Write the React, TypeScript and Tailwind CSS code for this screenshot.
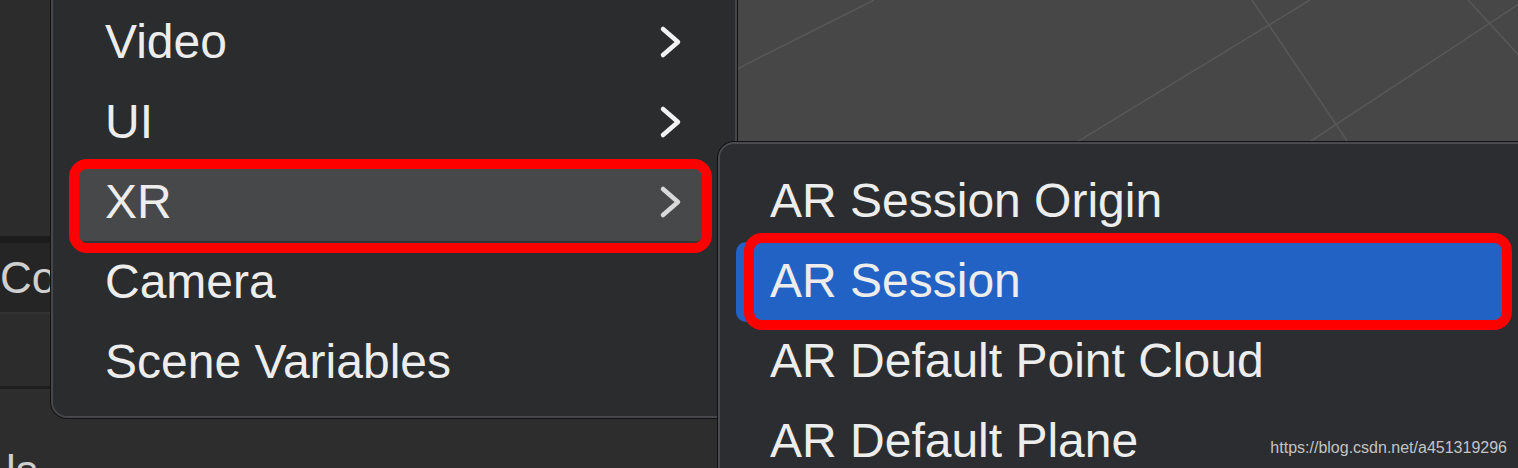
import React from 'react';

const font = { fontFamily: '"Liberation Sans", Arial, sans-serif' };

const Chevron: React.FC<{ dim?: boolean }> = ({ dim }) => (
  <svg width="24" height="34" viewBox="0 0 24 34" className="shrink-0">
    <polyline
      points="4,4 19,17 4,30"
      fill="none"
      stroke={dim ? '#d9d9d9' : '#f2f2f2'}
      strokeWidth="4.5"
      strokeLinecap="round"
      strokeLinejoin="round"
    />
  </svg>
);

const mainItems = [
  { label: 'Video', sub: true },
  { label: 'UI', sub: true },
  { label: 'XR', sub: true, active: true },
  { label: 'Camera', sub: false },
  { label: 'Scene Variables', sub: false },
];

const subItems = [
  { label: 'AR Session Origin' },
  { label: 'AR Session', active: true },
  { label: 'AR Default Point Cloud' },
  { label: 'AR Default Plane' },
];

function SceneGrid() {
  return (
    <svg viewBox="737 0 781 468" className="w-full h-full" preserveAspectRatio="none">
      <g stroke="#585858" strokeWidth="1.5" fill="none">
        <line x1="1310" y1="0" x2="890" y2="256" />
        <line x1="874" y1="0" x2="737" y2="69" />
        <line x1="1525" y1="0" x2="1100" y2="280" />
        <line x1="1252" y1="0" x2="1350" y2="145" />
        <line x1="1468" y1="0" x2="1525" y2="62" />
      </g>
    </svg>
  );
}

export default function App() {
  return (
    <div className="relative w-[1518px] h-[468px] overflow-hidden bg-[#2b2b2b]" style={font}>
      {/* background panels */}
      <div className="flex w-full h-full">
        <div className="w-[737px] h-full flex flex-col shrink-0">
          <div className="h-[236px] shrink-0 bg-[#2c2c2c]" />
          <div className="h-[7px] shrink-0 bg-[#1c1c1c]" />
          <div className="h-[69px] shrink-0 bg-[#252525] flex items-center overflow-hidden">
            <span className="text-[44px] leading-none text-[#cfcfcf]">Co</span>
          </div>
          <div className="h-[2px] shrink-0 bg-[#323232]" />
          <div className="h-[72px] shrink-0 bg-[#2c2c2c]" />
          <div className="h-[3px] shrink-0 bg-[#1e1e1e]" />
          <div className="flex-1 min-h-0 overflow-hidden bg-[#2d2d2d] pt-[60px] pl-[6px]">
            <div className="text-[44px] leading-none text-[#cfcfcf]">ls</div>
          </div>
        </div>
        <div className="flex-1 bg-[#474747]">
          <SceneGrid />
        </div>
      </div>

      {/* main context menu */}
      <div className="absolute left-[51px] top-[-10px] w-[686px] h-[428px] bg-[#2b2c2e] border-2 border-[#46474a] rounded-b-[16px] shadow-[0_0_0_1px_#111] pt-[10px]">
        {mainItems.map((item) => (
          <div key={item.label} className="relative h-[80px] flex items-center justify-between pl-[52px] pr-[52px]">
            {item.active && (
              <>
                <div className="absolute left-[21px] top-[4px] w-[632px] h-[78px] rounded-[10px] bg-[#47484a] border-b-[3px] border-[#333436]" />
                <div className="absolute left-[16px] top-[-3px] w-[643px] h-[94px] rounded-[18px] border-[10px] border-[#ff0000]" />
              </>
            )}
            <span className="relative text-[48px] leading-[80px] text-[#ededed]">{item.label}</span>
            {item.sub && (
              <span className="relative">
                <Chevron dim={item.active} />
              </span>
            )}
          </div>
        ))}
      </div>

      {/* submenu */}
      <div className="absolute left-[718px] top-[142px] w-[830px] h-[360px] bg-[#2b2d30] border-t-2 border-l-2 border-[#4a4b4e] rounded-tl-[16px] shadow-[0_0_0_1px_#111] pt-[17px]">
        {subItems.map((item) => (
          <div key={item.label} className="relative h-[80px] flex items-center pl-[50px]">
            {item.active && (
              <>
                <div className="absolute left-[16px] top-[1px] w-[768px] h-[80px] rounded-[10px] bg-[#2162c4]" />
                <div className="absolute left-[24px] top-[-8px] w-[768px] h-[97px] rounded-[18px] border-[10px] border-[#ff0000]" />
              </>
            )}
            <span className="relative text-[48px] leading-[80px] text-[#ededed]">{item.label}</span>
          </div>
        ))}
      </div>

      {/* watermark */}
      <div className="absolute top-[438px] right-[11px] text-[16px] leading-[20px] text-[#c4c4c4]">
        https://blog.csdn.net/a451319296
      </div>
    </div>
  );
}
